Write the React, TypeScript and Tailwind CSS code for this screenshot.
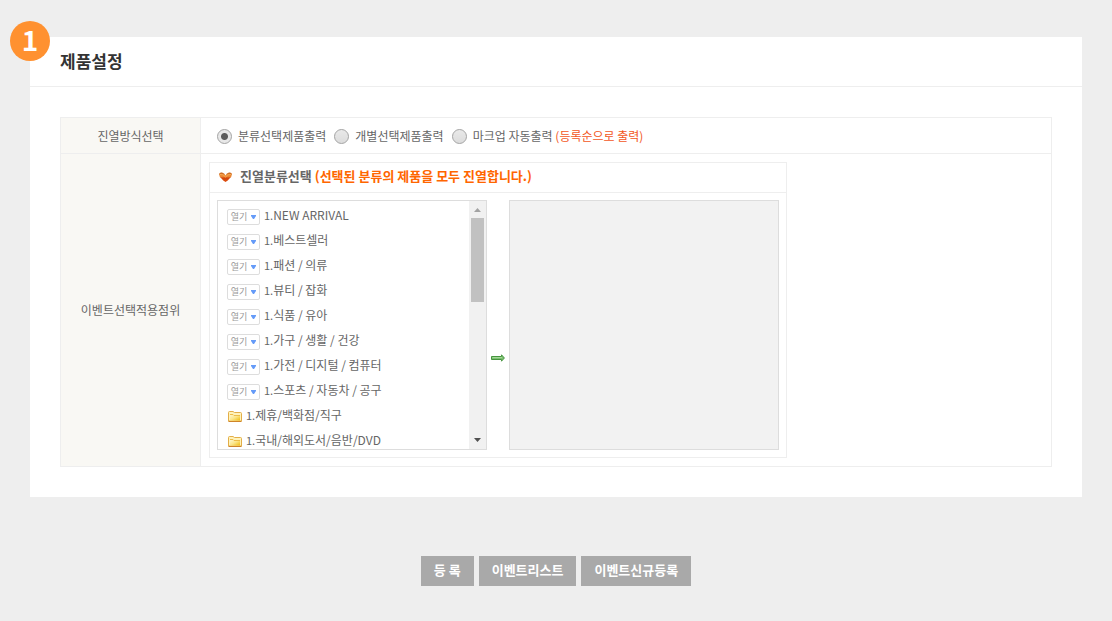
import { useState } from 'react';

type Category = { name: string; folder?: boolean };

const categories: Category[] = [
  { name: 'NEW ARRIVAL' },
  { name: '베스트셀러' },
  { name: '패션 / 의류' },
  { name: '뷰티 / 잡화' },
  { name: '식품 / 유아' },
  { name: '가구 / 생활 / 건강' },
  { name: '가전 / 디지털 / 컴퓨터' },
  { name: '스포츠 / 자동차 / 공구' },
  { name: '제휴/백화점/직구', folder: true },
  { name: '국내/해외도서/음반/DVD', folder: true },
];

const modes = [
  { id: 'category', label: '분류선택제품출력', note: '' },
  { id: 'single', label: '개별선택제품출력', note: '' },
  { id: 'markup', label: '마크업 자동출력', note: '(등록순으로 출력)' },
];

function FolderIcon() {
  return (
    <svg width="14" height="11" viewBox="0 0 14 11" className="shrink-0" aria-hidden="true">
      <defs>
        <linearGradient id="folder" x1="0" y1="0" x2="1" y2="1">
          <stop offset="0" stopColor="#fff8d0" />
          <stop offset="0.5" stopColor="#fbe68a" />
          <stop offset="1" stopColor="#f0bd10" />
        </linearGradient>
      </defs>
      <path d="M.5 10V1.5Q.5.5 1.5.5H5L6.5 1.5H12.5Q13.5 1.5 13.5 2.5V10Z" fill="#fff3bb" stroke="#e3ae48" />
      <path d="M2 3.5H5L6 5H12V9.5H2Z" fill="url(#folder)" />
      <path d="M2 3.5H5L6 4.5H12" fill="none" stroke="#edbd4a" />
      <path d="M.5 10.5H13.5" stroke="#cf8429" />
    </svg>
  );
}

function ChevronIcon() {
  return (
    <svg width="13" height="10" viewBox="0 0 13 10" className="mt-0.5 shrink-0" aria-hidden="true">
      <defs>
        <linearGradient id="chev" x1="0" y1="0" x2="0" y2="1">
          <stop offset="0" stopColor="#c2601c" />
          <stop offset="0.4" stopColor="#f09038" />
          <stop offset="0.6" stopColor="#d2440c" />
          <stop offset="1" stopColor="#e05212" />
        </linearGradient>
      </defs>
      <path d="M0 2Q.5 0 3 .5Q5.5 1 6.5 3.5Q7.5 1 10 .5Q12.5 0 13 2Q12.8 5 10.5 6.5Q9 8.5 6.5 10Q4 8.5 2.5 6.5Q.2 5 0 2Z" fill="url(#chev)" />
      <path d="M1 2.5Q4.5 2 6.5 5Q8.5 2 12 2.5" fill="none" stroke="#f9ab55" strokeWidth="1" />
    </svg>
  );
}

function MoveIcon() {
  return (
    <svg width="14" height="8" viewBox="0 0 14 8" aria-hidden="true">
      <path d="M.5 2.5H10.5V.8L13.4 4L10.5 7.2V5.5H.5Z" fill="#7cc070" stroke="#46943f" />
      <path d="M1.5 3.5H11" stroke="#a2d897" />
    </svg>
  );
}

export default function App() {
  const [mode, setMode] = useState('category');

  return (
    <div className="relative min-h-screen bg-[#eee] px-[30px] pt-[37px] pb-[35px] font-['Noto_Sans_CJK_KR','Noto_Sans',sans-serif] text-[12px] leading-[18px] text-[#666]">
      <span className="absolute top-[21px] left-[10px] flex size-10 items-center justify-center rounded-full bg-[#ff9130] pb-1 text-[28px] leading-9 font-bold text-white">
        1
      </span>

      <main className="bg-white">
        <h1 className="border-b border-[#eee] px-[30px] pt-[11px] pb-[13px] text-[17px] leading-[25px] font-bold text-[#333]">
          제품설정
        </h1>
        <div className="px-[30px] py-[30px]">
          <table className="w-full border-collapse">
            <tbody>
              <tr className="h-9">
                <th scope="row" className="w-[140px] border border-[#eee] bg-[#f9f8f4] font-normal">
                  진열방식선택
                </th>
                <td className="border border-[#eee] px-4">
                  <div className="flex items-center gap-2">
                    {modes.map((m) => (
                      <label key={m.id} className="flex items-center gap-[6px]">
                        <input
                          type="radio"
                          name="mode"
                          checked={mode === m.id}
                          onChange={() => setMode(m.id)}
                          className="mt-px size-[15px] appearance-none rounded-full border border-[#a5a5a5] bg-linear-to-b from-[#e9e9e9] to-[#dcdcdc] checked:bg-[radial-gradient(circle,#5c5c5c_0_3px,#e8e8e8_4px)]"
                        />
                        <span>
                          {m.label}
                          {m.note && <span className="text-[#f2571c]"> {m.note}</span>}
                        </span>
                      </label>
                    ))}
                  </div>
                </td>
              </tr>
              <tr>
                <th scope="row" className="border border-[#eee] bg-[#f9f8f4] font-normal">
                  이벤트선택적용점위
                </th>
                <td className="border border-[#eee] p-2">
                  <section className="w-[578px] border border-[#eee]">
                    <h2 className="flex items-center gap-2 border-b border-[#eee] px-[9px] pt-[3px] pb-[6px] text-[13px] leading-5 font-bold">
                      <ChevronIcon />
                      <span>
                        진열분류선택 <span className="text-[#f60]">(선택된 분류의 제품을 모두 진열합니다.)</span>
                      </span>
                    </h2>
                    <div className="flex items-center justify-between p-[7px]">
                      <div className="flex h-[250px] w-[270px] overflow-hidden border border-[#ddd]">
                        <ul className="flex-1 overflow-hidden px-[9px] pt-0.5">
                          {categories.map((c) => (
                            <li key={c.name} className="flex h-[25px] items-center gap-1">
                              {c.folder ? (
                                <span className="pt-0.5 pl-px">
                                  <FolderIcon />
                                </span>
                              ) : (
                                <button
                                  type="button"
                                  className="mt-0.5 flex h-4 w-[33px] items-center justify-center gap-1 rounded-xs border border-[#ddd] text-[9px] leading-3 text-[#999]"
                                >
                                  열기
                                  <svg width="5" height="4" viewBox="0 0 5 4" aria-hidden="true">
                                    <path d="M0 0H5V1L3 4H2L0 1Z" fill="#659bf8" />
                                  </svg>
                                </button>
                              )}
                              <span className="pb-px">
                                <span className="text-[11px]">1.</span>
                                {c.name}
                              </span>
                            </li>
                          ))}
                        </ul>
                        <div className="flex w-[17px] flex-col items-center justify-between bg-[#f1f1f1] pb-[7px]" aria-hidden="true">
                          <div className="flex flex-col items-center gap-[6px] pt-[7px]">
                            <svg width="7" height="4" viewBox="0 0 7 4">
                              <path d="M0 4L3.5 0L7 4Z" fill="#a3a3a3" />
                            </svg>
                            <div className="h-[84px] w-[13px] bg-[#c1c1c1]" />
                          </div>
                          <svg width="7" height="4" viewBox="0 0 7 4">
                            <path d="M0 0L3.5 4L7 0Z" fill="#505050" />
                          </svg>
                        </div>
                      </div>
                      <button type="button" aria-label="추가" className="mt-[66px]">
                        <MoveIcon />
                      </button>
                      <div className="h-[250px] w-[270px] border border-[#ddd] bg-[#f2f2f2]" />
                    </div>
                  </section>
                </td>
              </tr>
            </tbody>
          </table>
        </div>
      </main>

      <div className="mt-[59px] flex justify-center gap-[5px] text-[13px] font-bold text-white">
        <button type="button" className="h-[30px] bg-[#a9a9a9] px-[13px] pb-0.5">등 록</button>
        <button type="button" className="h-[30px] bg-[#a9a9a9] px-[13px] pb-0.5">이벤트리스트</button>
        <button type="button" className="h-[30px] bg-[#a9a9a9] px-[13px] pb-0.5">이벤트신규등록</button>
      </div>
    </div>
  );
}
